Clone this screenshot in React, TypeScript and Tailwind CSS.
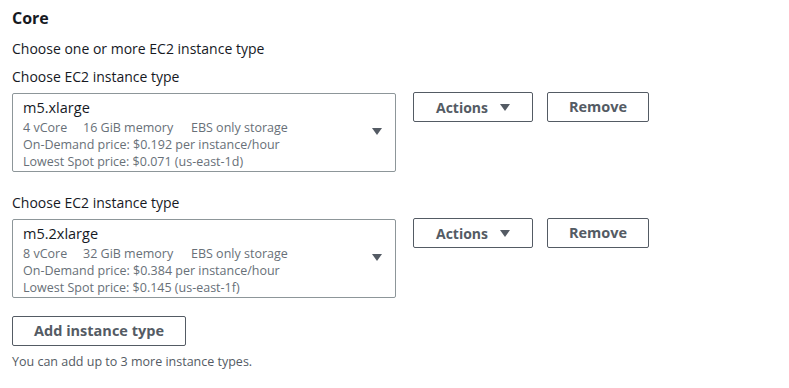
import React from "react";

function Caret({ className }: { className?: string }) {
  return (
    <svg className={className} width="10" height="7" viewBox="0 0 10 7">
      <path d="M0 0 H10 L5 7 Z" fill="currentColor" />
    </svg>
  );
}

function InstanceRow({
  name,
  specs,
  onDemand,
  spot,
}: {
  name: string;
  specs: [string, string, string];
  onDemand: string;
  spot: string;
}) {
  return (
    <div className="flex flex-col">
      <div className="text-[14px] leading-[20px] text-[#16191f]">Choose EC2 instance type</div>
      <div className="mt-[6px] flex items-start">
        <div className="relative w-[384px] h-[79px] border border-[#8d9699] rounded-[2px] pl-[10px] pt-[3px]">
          <div className="text-[14.5px] leading-[22px] text-[#16191f]">{name}</div>
          <div className="text-[12.5px] leading-[17px] text-[#687078]">
            <div className="flex">
              <span className="w-[60px] shrink-0">{specs[0]}</span>
              <span className="w-[108px] shrink-0">{specs[1]}</span>
              <span>{specs[2]}</span>
            </div>
            <div>{onDemand}</div>
            <div>{spot}</div>
          </div>
          <Caret className="absolute right-[13px] top-[34px] text-[#545b64]" />
        </div>
        <button className="ml-[17px] mt-[-1px] w-[120px] h-[30px] border border-[#545b64] rounded-[2px] flex items-center justify-center text-[14px] font-bold text-[#545b64]">
          Actions
          <Caret className="ml-[12px]" />
        </button>
        <button className="ml-[14px] mt-[-1px] w-[102px] h-[30px] border border-[#545b64] rounded-[2px] flex items-center justify-center text-[14.5px] font-bold text-[#545b64]">
          Remove
        </button>
      </div>
    </div>
  );
}

export default function App() {
  return (
    <div
      className="w-[789px] h-[388px] bg-white pl-[12px] pt-[7px]"
      style={{ fontFamily: '"Open Sans", "Noto Sans", sans-serif' }}
    >
      <div className="text-[16px] leading-[22px] font-bold text-[#16191f]">Core</div>
      <div className="mt-[10px] text-[14px] leading-[20px] text-[#16191f]">
        Choose one or more EC2 instance type
      </div>
      <div className="mt-[8px]">
        <InstanceRow
          name="m5.xlarge"
          specs={["4 vCore", "16 GiB memory", "EBS only storage"]}
          onDemand="On-Demand price: $0.192 per instance/hour"
          spot="Lowest Spot price: $0.071 (us-east-1d)"
        />
      </div>
      <div className="mt-[21px]">
        <InstanceRow
          name="m5.2xlarge"
          specs={["8 vCore", "32 GiB memory", "EBS only storage"]}
          onDemand="On-Demand price: $0.384 per instance/hour"
          spot="Lowest Spot price: $0.145 (us-east-1f)"
        />
      </div>
      <button className="mt-[18px] w-[174px] h-[30px] border border-[#545b64] rounded-[2px] flex items-center justify-center text-[14.5px] font-bold text-[#545b64]">
        Add instance type
      </button>
      <div className="mt-[8px] text-[12.5px] leading-[16px] text-[#545b64]">
        You can add up to 3 more instance types.
      </div>
    </div>
  );
}
